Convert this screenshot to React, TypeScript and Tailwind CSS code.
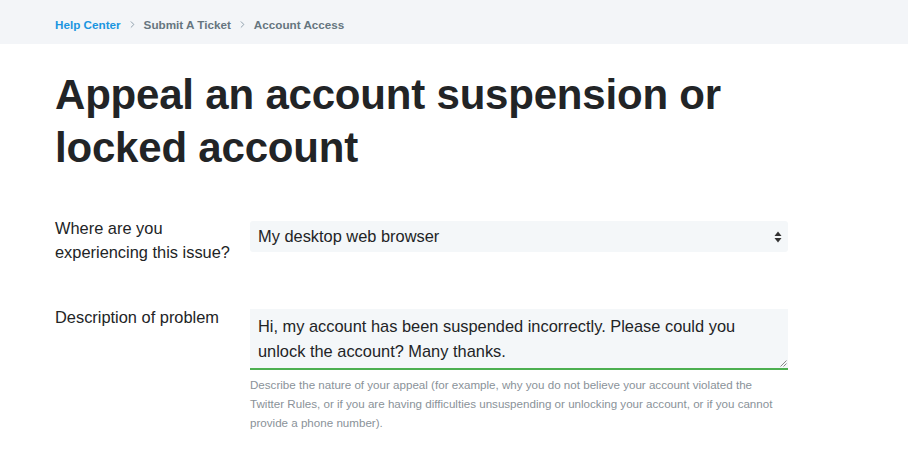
import { ChevronRight } from "lucide-react";

const font = { fontFamily: '"Liberation Sans", Arial, sans-serif' };

function Crumbs() {
  return (
    <div className="flex h-[44px] items-center bg-[#f3f5f8] pl-[55px] pt-[5px] text-[11.7px] font-bold">
      <span className="text-[#1b95e0]">Help Center</span>
      <ChevronRight size={11} strokeWidth={2} className="mx-[6px] text-[#8899a6]" />
      <span className="text-[#66757f]">Submit A Ticket</span>
      <ChevronRight size={11} strokeWidth={2} className="mx-[6px] text-[#8899a6]" />
      <span className="text-[#66757f]">Account Access</span>
    </div>
  );
}

export default function App() {
  return (
    <div style={font} className="h-[463px] w-[908px] overflow-hidden bg-white text-[#222426]">
      <Crumbs />
      <div className="pl-[55px]">
        <h1 className="mt-[24px] w-[700px] text-[42px] font-bold leading-[53px] tracking-[-0.2px] text-[#222426]">
          Appeal an account suspension or locked account
        </h1>

        <div className="mt-[42px] flex items-start">
          <div className="w-[195px] text-[16.4px] leading-[24px]">
            Where are you experiencing this issue?
          </div>
          <div className="mt-[5px] flex h-[31px] w-[538px] items-center justify-between rounded-[3px] bg-[#f4f7f9] pl-[8px] pr-[6px] text-[16.4px]">
            <span>My desktop web browser</span>
            <svg width="8" height="12" viewBox="0 0 8 12" className="text-[#333]">
              <path d="M4 0.5 L7.5 5 L0.5 5 Z" fill="currentColor" />
              <path d="M4 11.5 L7.5 7 L0.5 7 Z" fill="currentColor" />
            </svg>
          </div>
        </div>

        <div className="mt-[41px] flex items-start">
          <div className="w-[195px] text-[16.4px] leading-[24px]">
            Description of problem
          </div>
          <div className="mt-[4px] w-[538px]">
            <div className="relative h-[61px] border-b-2 border-[#4caf50] bg-[#f4f7f9] px-[8px] pt-[5px] text-[16.4px] leading-[25px]">
              Hi, my account has been suspended incorrectly. Please could you unlock the account? Many thanks.
              <svg width="7" height="7" viewBox="0 0 7 7" className="absolute bottom-[1px] right-[1px] text-[#888]">
                <path d="M6.5 0.5 L0.5 6.5 M6.5 3.5 L3.5 6.5" stroke="currentColor" strokeWidth="1" />
              </svg>
            </div>
            <p className="mt-[5px] text-[11.6px] leading-[19px] text-[#8a9299]">
              Describe the nature of your appeal (for example, why you do not believe your account violated the Twitter Rules, or if you are having difficulties unsuspending or unlocking your account, or if you cannot provide a phone number).
            </p>
          </div>
        </div>
      </div>
    </div>
  );
}
